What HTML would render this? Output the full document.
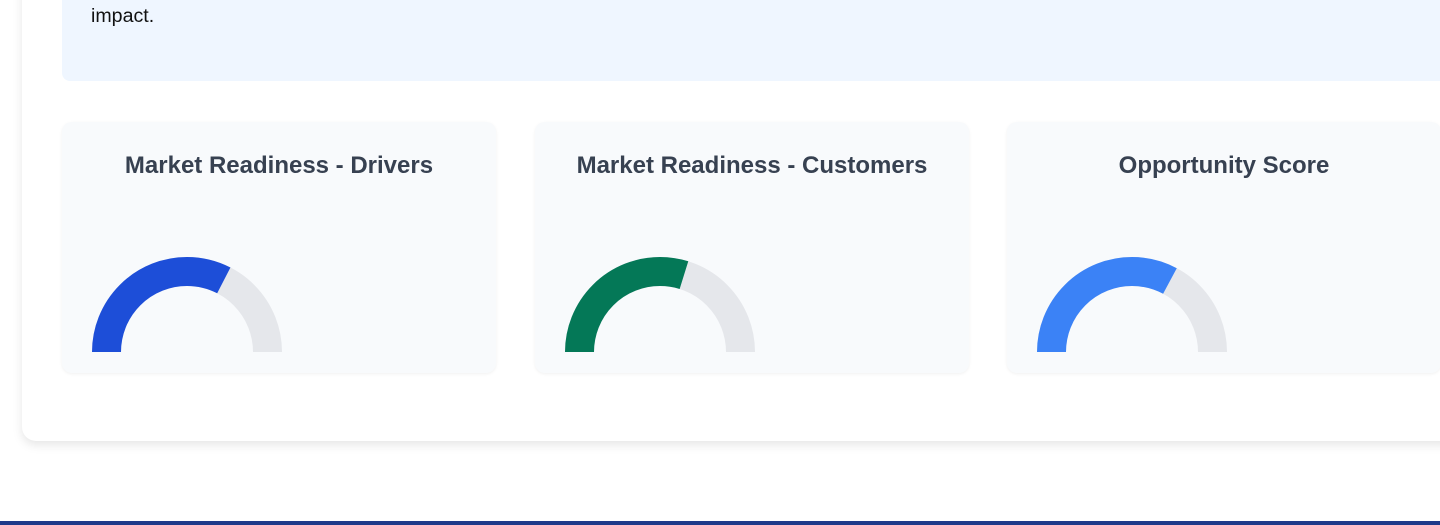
<!DOCTYPE html>
<html><head><style>
html,body{margin:0;padding:0;width:1440px;height:525px;overflow:hidden;background:#fff;font-family:"Liberation Sans",Arial,sans-serif;position:relative}
.outer{position:absolute;left:22px;top:-40px;width:1440px;height:481px;background:#fff;border-radius:14px;box-shadow:0 4px 10px rgba(0,0,0,.1)}
.info{position:absolute;left:62px;top:-40px;width:1400px;height:121px;background:#eff6ff;border-radius:8px}
.info p{position:absolute;left:29px;top:45px;margin:0;font-size:19.6px;color:#111}
.card{position:absolute;top:122px;width:434px;height:251px;background:#f8fafc;border-radius:10px;box-shadow:0 1px 3px rgba(0,0,0,.06)}
.card h3{margin:0;position:absolute;top:30px;left:0;width:100%;text-align:center;font-size:24px;font-weight:bold;color:#374151}
.card svg{position:absolute;left:30px;top:135px}
.bar{position:absolute;left:0;top:521px;width:1440px;height:4px;background:#1e3a8a}
</style></head><body>
<div class="outer"></div>
<div class="info"><p>impact.</p></div>
<div class="card" style="left:62px"><h3>Market Readiness - Drivers</h3>
<svg width="190" height="96"><path d="M14.5 95 A80.5 80.5 0 0 1 175.5 95" fill="none" stroke="#e5e7eb" stroke-width="29"/><path d="M14.5 95 A80.5 80.5 0 0 1 175.5 95" fill="none" stroke="#1d4ed8" stroke-width="29" pathLength="100" stroke-dasharray="65.2 200"/></svg></div>
<div class="card" style="left:535px"><h3>Market Readiness - Customers</h3>
<svg width="190" height="96"><path d="M14.5 95 A80.5 80.5 0 0 1 175.5 95" fill="none" stroke="#e5e7eb" stroke-width="29"/><path d="M14.5 95 A80.5 80.5 0 0 1 175.5 95" fill="none" stroke="#047857" stroke-width="29" pathLength="100" stroke-dasharray="59.7 200"/></svg></div>
<div class="card" style="left:1007px"><h3>Opportunity Score</h3>
<svg width="190" height="96"><path d="M14.5 95 A80.5 80.5 0 0 1 175.5 95" fill="none" stroke="#e5e7eb" stroke-width="29"/><path d="M14.5 95 A80.5 80.5 0 0 1 175.5 95" fill="none" stroke="#3b82f6" stroke-width="29" pathLength="100" stroke-dasharray="65.7 200"/></svg></div>
<div class="bar"></div>
</body></html>
